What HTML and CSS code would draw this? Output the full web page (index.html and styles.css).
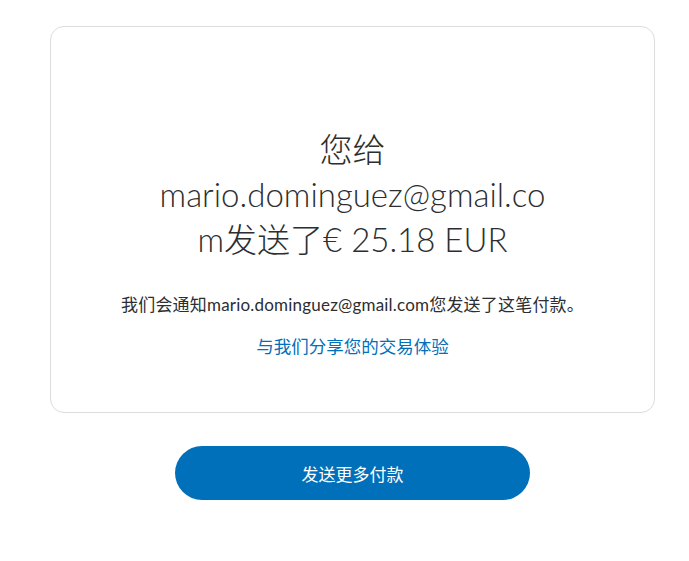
FILE: index.html
```html
<!DOCTYPE html>
<html lang="zh-CN">

<head>
  <meta charset="UTF-8" />
  <title>付款已发送</title>
  <link rel="stylesheet" href="styles.css">
</head>

<body>
  <div class="page">
    <div class="result-card">
      <h1 class="result-title">您给mario.dominguez@gmail.com发送了€ 25.18 EUR</h1>
      <p class="result-note">我们会通知mario.dominguez@gmail.com您发送了这笔付款。</p>
      <a class="feedback-link" href="#">与我们分享您的交易体验</a>
    </div>

    <div class="actions">
      <button class="send-more">发送更多付款</button>
    </div>
  </div>
</body>

</html>
```

FILE: styles.css
```css
/* Reset default margin and padding */
* {
  margin: 0;
  padding: 0;
  box-sizing: border-box;
}

body {
  background-color: #fff;
  color: #2c2e2f;
  font-family: Lato, "Noto Sans CJK SC", sans-serif;
}

/* Page wrapper, content is a little off centre */
.page {
  padding: 26px 34px 0 50px;
}

/* Confirmation card */
.result-card {
  display: flex;
  flex-direction: column;
  align-items: center;
  height: 387px;
  padding-top: 100px;
  border: 1px solid #dcdcdc;
  border-radius: 14px;
  text-align: center;
}

.result-title {
  width: 402px;
  font-size: 33px;
  font-weight: 300;
  line-height: 45px;
  overflow-wrap: anywhere;
}

.result-note {
  margin-top: 31px;
  font-size: 17px;
  line-height: 24px;
  letter-spacing: 0.2px;
}

.feedback-link {
  margin-top: 17px;
  color: #0070ba;
  font-size: 17.5px;
  line-height: 26px;
  text-decoration: none;
}

/* Button row */
.actions {
  display: flex;
  justify-content: center;
  margin-top: 33px;
}

.send-more {
  width: 355px;
  height: 54px;
  background-color: #0070ba;
  color: #fff;
  font-family: Lato, "Noto Sans CJK SC", sans-serif;
  font-size: 17px;
  border: none;
  border-radius: 27px;
  cursor: pointer;
}
```
